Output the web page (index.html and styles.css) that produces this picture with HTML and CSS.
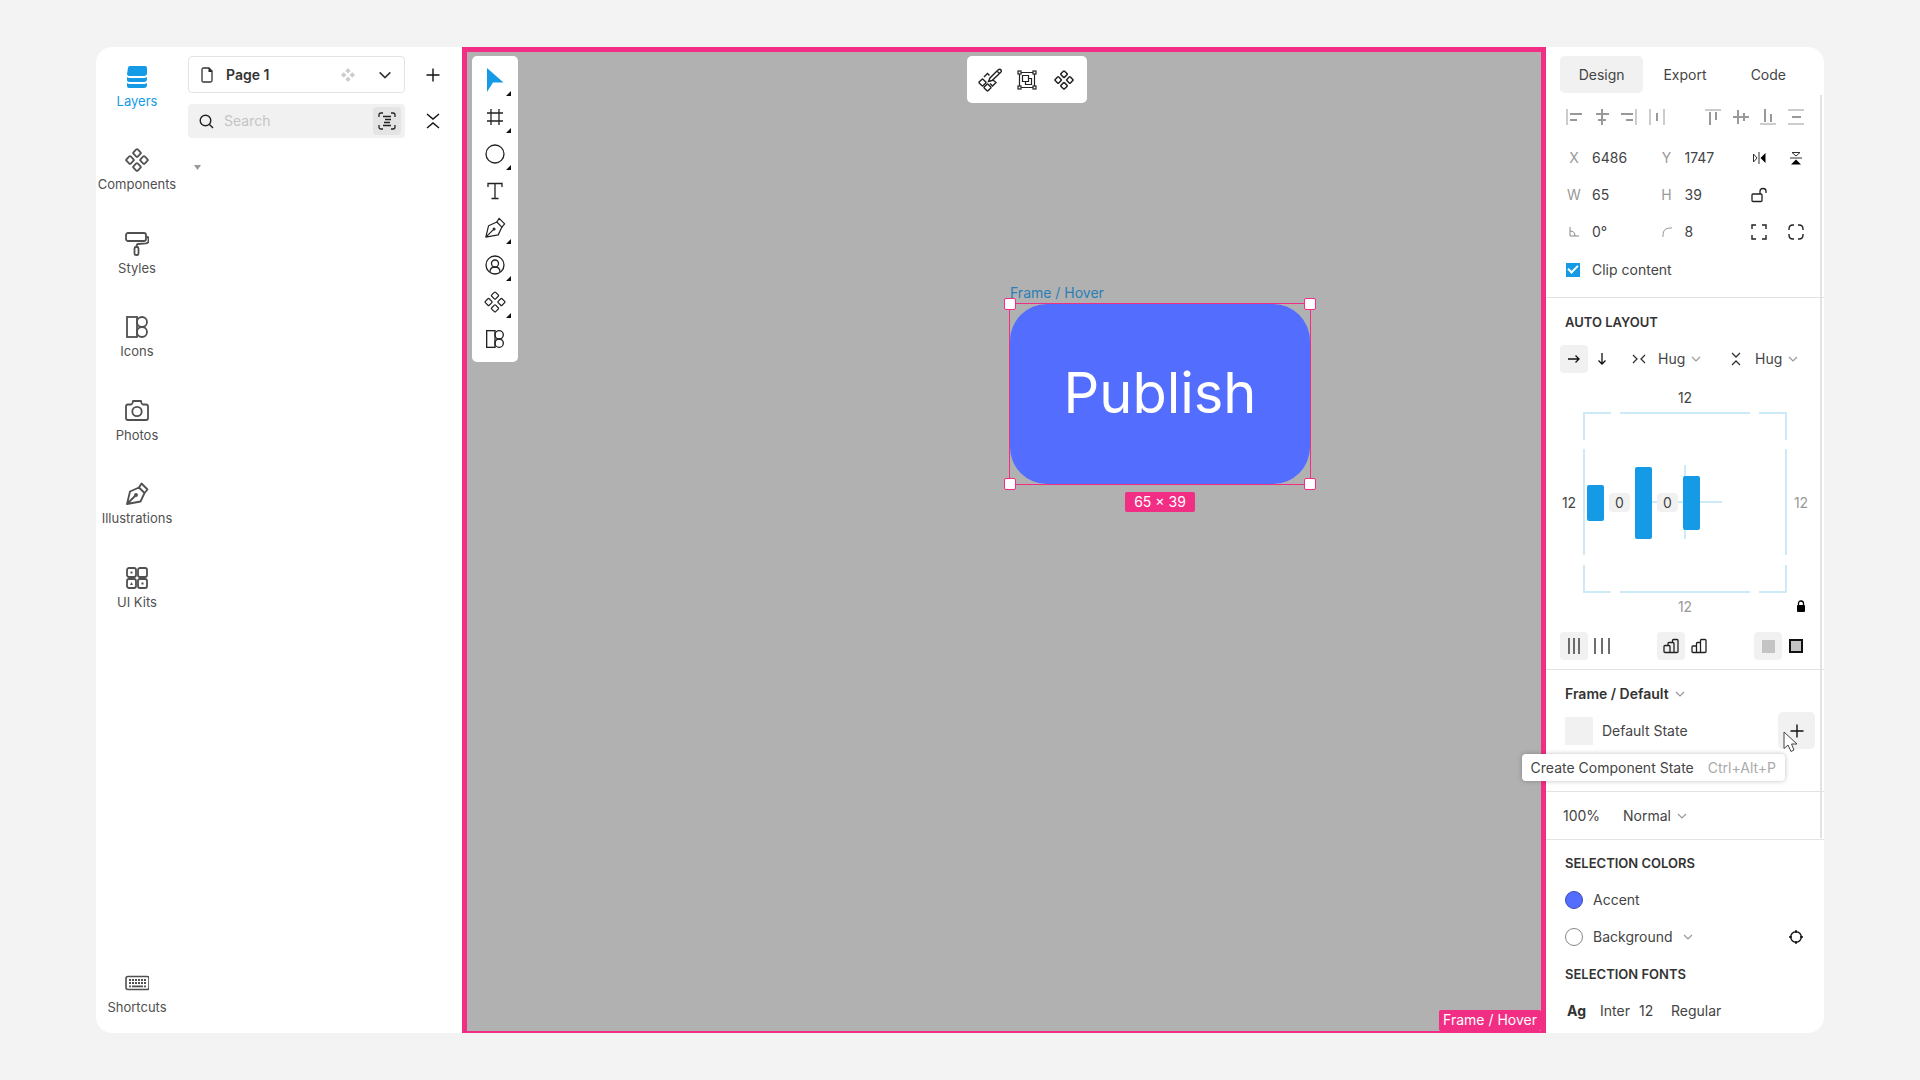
FILE: index.html
```html
<!DOCTYPE html>
<html lang="en">
<head>
<meta charset="utf-8">
<meta name="viewport" content="width=device-width, initial-scale=1">
<title>Design editor</title>
<link rel="stylesheet" href="styles.css">
</head>
<body>
<svg class="sprite" aria-hidden="true">
  <symbol id="components" viewBox="0 0 24 24"><g fill="none" stroke="currentColor" stroke-linejoin="round"><rect x="-3" y="-3" width="6" height="6" rx="1" transform="translate(12 5) rotate(45)"/><rect x="-3" y="-3" width="6" height="6" rx="1" transform="translate(5 12) rotate(45)"/><rect x="-3" y="-3" width="6" height="6" rx="1" transform="translate(19 12) rotate(45)"/><rect x="-3" y="-3" width="6" height="6" rx="1" transform="translate(12 19) rotate(45)"/></g></symbol>
  <symbol id="pen" viewBox="0 0 24 24"><g fill="none" stroke="currentColor" stroke-linejoin="round" stroke-linecap="round"><path d="M2 22 5 9.500 14 5.500 19.500 11 15.500 19.500ZM2 22 10 14"/><circle cx="11" cy="13" r="1"/><path d="M14 5.500 16.500 1.500 22.500 7.500 19.500 11"/></g></symbol>
  <symbol id="icons" viewBox="0 0 24 24"><g fill="none" stroke="currentColor"><rect x="2" y="2" width="10" height="20"/><circle cx="17" cy="7" r="5"/><circle cx="17" cy="17" r="5"/></g></symbol>
  <symbol id="chevron" viewBox="0 0 12 12"><path d="M2 4 6 8 10 4" fill="none" stroke="currentColor"/></symbol>
  <symbol id="plus" viewBox="0 0 14 14"><path d="M7 .5V13.500M.5 7H13.500" fill="none" stroke="currentColor"/></symbol>
  <symbol id="collapse" viewBox="0 0 14 18"><path d="M1 2 7 7 13 2M1 16 7 11 13 16" fill="none" stroke="currentColor"/></symbol>
</svg>

<main class="app">
  <nav class="rail" aria-label="Libraries">
    <ul class="rail-list">
      <li><a class="rail-item active" href="#layers">
        <svg class="i24" viewBox="0 0 24 24"><path fill="currentColor" d="M5 1H20Q22 1 22 3V8Q22 11 19 11H4Q2 11 2 9L3 3Q3 1 5 1ZM2 12Q3 13 5 13H20L22 12V14Q22 17 19 17H4Q2 17 2 15ZM2 18Q3 19 5 19H20L22 18V20Q22 23 19 23H4Q2 23 2 21Z"/></svg>Layers</a></li>
      <li><a class="rail-item" href="#components"><svg class="i24 bold"><use href="#components"/></svg>Components</a></li>
      <li><a class="rail-item" href="#styles">
        <svg class="i24 bold" viewBox="0 0 24 24"><g fill="none" stroke="currentColor"><rect x="1" y="1" width="20" height="8" rx="2"/><path d="M21 5H22Q23.500 5 23.500 7V9Q23.500 11 21 11.300L13 12Q11.500 12.200 11.500 15"/><rect x="9.500" y="15" width="4" height="8" rx="1.500"/></g></svg>Styles</a></li>
      <li><a class="rail-item" href="#icons"><svg class="i24 bold"><use href="#icons"/></svg>Icons</a></li>
      <li><a class="rail-item" href="#photos">
        <svg class="i24 bold" viewBox="0 0 24 24"><g fill="none" stroke="currentColor" stroke-linejoin="round"><path d="M3 5.500H6Q7 5.500 7.500 4L8 2H16L16.500 4Q17 5.500 18 5.500H21Q23 5.500 23 7.500V19Q23 21 21 21H3Q1 21 1 19V7.500Q1 5.500 3 5.500Z"/><circle cx="12" cy="12.500" r="4.700"/></g></svg>Photos</a></li>
      <li><a class="rail-item" href="#illustrations"><svg class="i24 bold"><use href="#pen"/></svg>Illustrations</a></li>
      <li><a class="rail-item" href="#kits">
        <svg class="i24 bold" viewBox="0 0 24 24"><g fill="none" stroke="currentColor"><rect x="2" y="2" width="9" height="9" rx="2"/><rect x="13" y="2" width="9" height="9" rx="2"/><rect x="2" y="13" width="9" height="9" rx="2"/><rect x="13" y="13" width="9" height="9" rx="2"/></g><path fill="currentColor" d="M5.500 5.500h2v2h-2zM6.500 16l1.500 3h-3zM16.500 16.500h2v2h-2z"/></svg>UI Kits</a></li>
    </ul>
    <a class="rail-item" href="#shortcuts">
      <svg class="i24" viewBox="0 0 24 24"><rect x="1" y="5.500" width="23" height="13" rx="2" fill="none" stroke="currentColor" stroke-width="1.600"/><path d="M4 9H21.500M4 12H21.500" stroke="currentColor" stroke-width="1.800" stroke-dasharray="2 1"/><path d="M4 15.300H6M7 15.300H18M19 15.300H21" stroke="currentColor" stroke-width="1.800"/></svg>Shortcuts</a>
  </nav>

  <aside class="pages">
    <div class="pages-row">
      <button class="page-picker" type="button">
        <svg width="12" height="16" viewBox="0 0 12 16"><path d="M2.500 1H8L11 4V13.500Q11 15 9.500 15H2.500Q1 15 1 13.500V2.500Q1 1 2.500 1Z" fill="none" stroke="#333" stroke-width="1.300"/><path d="M7.500 1 11.500 5H7.500Z" fill="#222"/></svg>
        <span class="page-name">Page 1</span>
        <svg class="page-comp" width="14" height="14" viewBox="0 0 14 14"><path fill="#ccc" d="M7 0 9.700 2.700 7 5.400 4.300 2.700ZM7 8.600 9.700 11.300 7 14 4.300 11.300ZM2.700 4.300 5.400 7 2.700 9.700 0 7ZM11.300 4.300 14 7 11.300 9.700 8.600 7Z"/></svg>
        <svg class="page-chev" width="16" height="16"><use href="#chevron"/></svg>
      </button>
      <button class="side-btn" type="button" aria-label="Add page"><svg width="14" height="14"><use href="#plus"/></svg></button>
    </div>
    <div class="pages-row">
      <div class="search">
        <svg width="15" height="15" viewBox="0 0 15 15" fill="none" stroke="#222" stroke-width="1.400"><circle cx="6.500" cy="6.500" r="5.300"/><path d="M10.500 10.500 14 14"/></svg>
        <input type="search" placeholder="Search" aria-label="Search layers">
        <button class="scan" type="button" aria-label="Select matches"><svg width="18" height="18" viewBox="0 0 18 18" fill="none" stroke="#222" stroke-width="1.300"><path d="M1 5V3Q1 1 3 1H5M13 1H15Q17 1 17 3V5M17 13V15Q17 17 15 17H13M5 17H3Q1 17 1 15V13M5 4.500H13M7 7.500H13M6 10.500H12M5 13.500H13"/></svg></button>
      </div>
      <button class="side-btn" type="button" aria-label="Collapse all"><svg width="14" height="18"><use href="#collapse"/></svg></button>
    </div>
    <svg class="twisty" width="7" height="5" viewBox="0 0 7 5"><path d="M0 0H7L3.500 5Z" fill="#999"/></svg>
  </aside>

  <section class="canvas" aria-label="Canvas">
    <div class="tools" role="toolbar" aria-label="Tools">
      <button class="tool more" type="button" aria-label="Select"><svg width="18" height="24" viewBox="0 0 18 24"><path d="M1 0 17.500 14.500H7L1 24Z" fill="#159be5"/></svg></button>
      <button class="tool more" type="button" aria-label="Frame"><svg width="18" height="18" viewBox="0 0 18 18"><path d="M5 1V17M13 1V17M1 5H17M1 13H17" fill="none" stroke="#222" stroke-width="1.300"/></svg></button>
      <button class="tool more" type="button" aria-label="Shape"><svg width="20" height="20" viewBox="0 0 20 20"><circle cx="10" cy="10" r="9" fill="none" stroke="#222" stroke-width="1.300"/></svg></button>
      <button class="tool" type="button" aria-label="Text"><svg width="18" height="18" viewBox="0 0 18 18"><path d="M2 5V1.500H16V5M9 1.500V16.500M5.500 16.500H12.500" fill="none" stroke="#222" stroke-width="1.300"/></svg></button>
      <button class="tool more" type="button" aria-label="Pen"><svg class="i22"><use href="#pen"/></svg></button>
      <button class="tool more" type="button" aria-label="Avatar"><svg width="20" height="20" viewBox="0 0 20 20" fill="none" stroke="#222" stroke-width="1.300"><circle cx="10" cy="10" r="9"/><circle cx="10" cy="8.500" r="3.500"/><path d="M5 17Q5 12 10 12T15 17"/></svg></button>
      <button class="tool more" type="button" aria-label="Component"><svg class="i22"><use href="#components"/></svg></button>
      <button class="tool" type="button" aria-label="Icon set"><svg class="i20"><use href="#icons"/></svg></button>
    </div>

    <div class="actions" role="toolbar" aria-label="Selection actions">
      <button class="tool" type="button" aria-label="Edit component"><svg width="24" height="24" viewBox="0 0 24 24" fill="none" stroke="#222" stroke-width="1.400"><rect x="-2.700" y="-2.700" width="5.400" height="5.400" rx="1" transform="translate(4.500 14.500) rotate(45)"/><rect x="-2.700" y="-2.700" width="5.400" height="5.400" rx="1" transform="translate(9.500 19.500) rotate(45)"/><path d="M6 9 9.500 5.500 11.500 7.500M15 12 18 14.500 14.500 18 12 15.500M10.500 13.500 12 10 20 2Q22 .5 23 2T22 5L14 12.500 10.500 13.500ZM19 3 21.500 5.500"/></svg></button>
      <button class="tool" type="button" aria-label="Group"><svg width="20" height="20" viewBox="0 0 20 20" fill="none" stroke="#222" stroke-width="1.200"><path d="M2.500 2.500H17.500V17.500H2.500ZM5.500 5.500H11.500V11.500H5.500ZM11.500 8.500H14.500V14.500H8.500V11.500"/><g fill="#fff"><rect x="1" y="1" width="3" height="3"/><rect x="16" y="1" width="3" height="3"/><rect x="1" y="16" width="3" height="3"/><rect x="16" y="16" width="3" height="3"/></g></svg></button>
      <button class="tool" type="button" aria-label="Create component"><svg class="i20 bold"><use href="#components"/></svg></button>
    </div>

    <div class="selection">
      <span class="frame-name">Frame / Hover</span>
      <div class="frame">Publish</div>
      <i class="handle tl"></i><i class="handle tr"></i><i class="handle bl"></i><i class="handle br"></i>
      <span class="size">65 × 39</span>
    </div>
    <span class="canvas-tag">Frame / Hover</span>
  </section>

  <aside class="inspector">
    <div class="tabs" role="tablist">
      <button class="tab active" type="button" role="tab" aria-selected="true">Design</button>
      <button class="tab" type="button" role="tab">Export</button>
      <button class="tab" type="button" role="tab">Code</button>
    </div>
    <div class="scrollbar"></div>

    <section class="group">
      <div class="align">
        <button type="button" aria-label="Align left"><svg class="al" viewBox="0 0 16 16"><path d="M1 0V16"/><path class="thick" d="M4 5H16M4 11H11"/></svg></button>
        <button type="button" aria-label="Align center"><svg class="al" viewBox="0 0 16 16"><path class="thick" d="M8 0V16M2 5H15M4 11H12"/></svg></button>
        <button type="button" aria-label="Align right"><svg class="al" viewBox="0 0 16 16"><path d="M15 0V16"/><path class="thick" d="M0 5H12M5 11H12"/></svg></button>
        <button type="button" aria-label="Distribute horizontally"><svg class="al" viewBox="0 0 16 16"><path d="M1 0V16M15 0V16"/><path class="thick" d="M8 4V12"/></svg></button>
        <span></span>
        <button type="button" aria-label="Align top"><svg class="al" viewBox="0 0 16 16"><path d="M0 1H16"/><path class="thick" d="M5 3V16M11 3V11"/></svg></button>
        <button type="button" aria-label="Align middle"><svg class="al" viewBox="0 0 16 16"><path class="thick" d="M0 8H16M5 1V15M11 4V12"/></svg></button>
        <button type="button" aria-label="Align bottom"><svg class="al" viewBox="0 0 16 16"><path d="M0 15H16"/><path class="thick" d="M5 0V13M11 5V13"/></svg></button>
        <button type="button" aria-label="Distribute vertically"><svg class="al" viewBox="0 0 16 16"><path d="M0 1H16M0 15H16"/><path class="thick" d="M4 8H13"/></svg></button>
      </div>
      <div class="fields">
        <label for="fx">X</label><input id="fx" value="6486"><label for="fy">Y</label><input id="fy" value="1747">
        <div class="pair">
          <button type="button" aria-label="Flip horizontal"><svg width="14" height="12" viewBox="0 0 14 12"><path d="M1.500 2 5 6 1.500 10ZM7 0V12" fill="none" stroke="#333"/><path d="M13.500 1V11L8.500 6Z"/></svg></button>
          <button type="button" aria-label="Flip vertical"><svg width="12" height="14" viewBox="0 0 12 14"><path d="M2 1.500 6 5 10 1.500ZM0 7H12" fill="none" stroke="#333"/><path d="M1 13.500H11L6 8.500Z"/></svg></button>
        </div>
        <label for="fw">W</label><input id="fw" value="65"><label for="fh">H</label><input id="fh" value="39">
        <div class="pair"><button type="button" aria-label="Lock ratio"><svg width="16" height="16" viewBox="0 0 16 16" fill="none" stroke="#222" stroke-width="1.300"><rect x="1" y="7" width="10" height="7.500" rx="1"/><path d="M9 7V4Q9 1.500 12 1.500T15 4V6"/></svg></button></div>
        <label for="fr" aria-label="Rotation"><svg width="10" height="10" viewBox="0 0 10 10" fill="none" stroke="#888"><path d="M1 0V9H10M1 4Q6 4 6 9"/></svg></label><input id="fr" value="0°"><label for="fc" aria-label="Corner radius"><svg width="10" height="10" viewBox="0 0 10 10" fill="none" stroke="#999"><path d="M1 10V8Q1 1 8 1H10"/></svg></label><input id="fc" value="8">
        <div class="pair">
          <button type="button" aria-label="Square corners"><svg width="16" height="16" viewBox="0 0 16 16" fill="none" stroke="#222" stroke-width="1.400"><path d="M1 5V1H5M11 1H15V5M15 11V15H11M5 15H1V11"/></svg></button>
          <button type="button" aria-label="Round corners"><svg width="16" height="16" viewBox="0 0 16 16" fill="none" stroke="#222" stroke-width="1.400"><path d="M1 6V5Q1 1 5 1H6M10 1H11Q15 1 15 5V6M15 10V11Q15 15 11 15H10M6 15H5Q1 15 1 11V10"/></svg></button>
        </div>
      </div>
      <label class="check"><input type="checkbox" checked>Clip content</label>
    </section>

    <section class="group">
      <h2>AUTO LAYOUT</h2>
      <div class="direction">
        <div class="duo">
          <button class="on" type="button" aria-label="Horizontal"><svg width="12" height="12" viewBox="0 0 12 12" fill="none" stroke="#111" stroke-width="1.300"><path d="M0 6H11M7.500 2.500 11 6 7.500 9.500"/></svg></button>
          <button type="button" aria-label="Vertical"><svg width="12" height="12" viewBox="0 0 12 12" fill="none" stroke="#111" stroke-width="1.300"><path d="M6 0V11M2.500 7.500 6 11 9.500 7.500"/></svg></button>
        </div>
        <label class="picker"><span class="pic"><svg width="14" height="10" viewBox="0 0 14 10" fill="none" stroke="#333" stroke-width="1.300"><path d="M1 1 5 5 1 9M13 1 9 5 13 9"/></svg></span><select aria-label="Width sizing"><option>Hug</option></select><svg class="chev"><use href="#chevron"/></svg></label>
        <label class="picker"><span class="pic"><svg width="10" height="14" viewBox="0 0 10 14" fill="none" stroke="#333" stroke-width="1.300"><path d="M1 1 5 5 9 1M1 13 5 9 9 13"/></svg></span><select aria-label="Height sizing"><option>Hug</option></select><svg class="chev"><use href="#chevron"/></svg></label>
      </div>
      <div class="padding">
        <input class="pad-top" value="12" aria-label="Top padding">
        <input class="pad-left" value="12" aria-label="Left padding">
        <div class="pad-box">
          <svg class="pad-lines" width="204" height="181" viewBox="0 0 204 181" fill="none" stroke="#cdeaf8" stroke-width="2"><path d="M28 1H1V28M37 1H167M176 1H203V28M1 37V143M203 37V143M1 153V180H28M37 180H167M176 180H203V153M65 90H139M102 53V127"/></svg>
          <span class="bar short"></span><input class="gap-val" value="0" aria-label="First gap"><span class="bar tall"></span><input class="gap-val" value="0" aria-label="Second gap"><span class="bar mid"></span>
        </div>
        <input class="pad-right dim" value="12" aria-label="Right padding">
        <input class="pad-bottom dim" value="12" aria-label="Bottom padding">
        <button class="lock" type="button" aria-label="Lock padding"><svg width="10" height="13" viewBox="0 0 10 13"><path d="M2.500 6V3.500Q2.500 1 5 1T7.500 3.500V6" fill="none" stroke="#000" stroke-width="1.300"/><rect x="1" y="5" width="8" height="7" rx="1"/></svg></button>
      </div>
      <div class="options">
        <div class="duo">
          <button class="on" type="button" aria-label="Packed"><svg width="16" height="16" viewBox="0 0 16 16" stroke="#333" stroke-width="1.400"><path d="M3 0V16M8 0V16M13 0V16"/></svg></button>
          <button type="button" aria-label="Spaced"><svg width="16" height="16" viewBox="0 0 16 16" stroke="#333" stroke-width="1.400"><path d="M1 0V16M8 0V16M15 0V16"/></svg></button>
        </div>
        <div class="duo">
          <button class="on" type="button" aria-label="Last on top"><svg width="16" height="16" viewBox="0 0 16 16" fill="none" stroke="#222" stroke-width="1.300"><path d="M1 8.500Q1 7.500 2 7.500H6Q7 7.500 7 8.500V14.500H2Q1 14.500 1 13.500ZM5 7.500V5.500Q5 4.500 6 4.500H10Q11 4.500 11 5.500V14.500H7M9.500 4.500V2.500Q9.500 1.500 10.500 1.500H14Q15 1.500 15 2.500V13.500Q15 14.500 14 14.500H11"/></svg></button>
          <button type="button" aria-label="First on top"><svg width="16" height="16" viewBox="0 0 16 16" fill="none" stroke="#222" stroke-width="1.300"><path d="M9.500 14.500V2.500Q9.500 1.500 10.500 1.500H14Q15 1.500 15 2.500V13.500Q15 14.500 14 14.500ZM9.500 4.500H6.500Q5.500 4.500 5.500 5.500V14.500H9.500M5.500 8H2Q1 8 1 9V13.500Q1 14.500 2 14.500H5.500"/></svg></button>
        </div>
        <div class="duo">
          <button class="on" type="button" aria-label="Exclude strokes"><i class="square"></i></button>
          <button type="button" aria-label="Include strokes"><i class="square outlined"></i></button>
        </div>
      </div>
    </section>

    <section class="group states">
      <h2 class="strong">Frame / Default <svg class="chev"><use href="#chevron"/></svg></h2>
      <div class="state">
        <span class="thumb"></span>Default State
        <button class="add" type="button" aria-describedby="tip" aria-label="Create Component State"><svg width="14" height="14"><use href="#plus"/></svg></button>
        <div class="tooltip" id="tip" role="tooltip">Create Component State<kbd>Ctrl+Alt+P</kbd></div>
        <svg class="pointer" width="16" height="22" viewBox="0 0 16 22"><path d="M1 1V17.500L5 14 8 20.500 11 19 8.500 13H14Z" fill="#fff" stroke="#444"/></svg>
      </div>
    </section>

    <section class="group">
      <div class="blend"><input value="100%" aria-label="Opacity"><select aria-label="Blend mode"><option>Normal</option></select><svg class="chev"><use href="#chevron"/></svg></div>
    </section>

    <section class="group">
      <h2>SELECTION COLORS</h2>
      <div class="color"><i class="dot accent"></i>Accent</div>
      <div class="color"><i class="dot"></i>Background<svg class="chev"><use href="#chevron"/></svg>
        <button class="target" type="button" aria-label="Find usages"><svg width="14" height="14" viewBox="0 0 14 14" fill="none" stroke="#111" stroke-width="1.400"><circle cx="7" cy="7" r="5.300"/><path d="M7 0V3M7 11V14M0 7H3M11 7H14"/></svg></button></div>
      <h2>SELECTION FONTS</h2>
      <div class="font"><b>Ag</b><span class="family">Inter</span><span class="pt">12</span><span>Regular</span></div>
    </section>
  </aside>
</main>
</body>
</html>
```
FILE: styles.css
```css
* { box-sizing: border-box; }
body {
  margin: 0;
  min-height: 100vh;
  padding: 47px 5%;
  display: flex;
  background: #f3f3f3;
  color: #444;
  font: 14px/20px Inter, "Liberation Sans", sans-serif;
}
button, input, select {
  font: inherit;
  color: inherit;
  margin: 0;
  padding: 0;
  border: 0;
  background: none;
  border-radius: 0;
  outline: 0;
}
button { display: flex; align-items: center; justify-content: center; }
input { width: 100%; min-width: 0; }
select { appearance: none; }
svg { display: block; flex: none; }
.sprite { position: absolute; width: 0; height: 0; }
.i20 { width: 20px; height: 20px; stroke-width: 1.6; }
.i22 { width: 22px; height: 22px; stroke-width: 1.3; }
.i24 { width: 24px; height: 24px; }
.bold { stroke-width: 1.8; }
.chev { width: 12px; height: 12px; color: #999; stroke-width: 1.2; }

.app {
  flex: 1;
  display: grid;
  grid-template-columns: 82px 284px minmax(0, 1fr) 278px;
  background: #fff;
  border-radius: 16px;
}

/* Library rail */
.rail { display: flex; flex-direction: column; justify-content: space-between; padding: 18px 0 17px; }
.rail-list { margin: 0; padding: 0; list-style: none; display: flex; flex-direction: column; height: 584px; }
.rail-list li { flex: 1; }
.rail-item {
  display: flex;
  flex-direction: column;
  align-items: center;
  gap: 3px;
  color: #505050;
  font-size: 13px;
  line-height: 18px;
  text-decoration: none;
}
.rail-item.active { color: #159be5; }

/* Pages and layers */
.pages { padding: 9px 0 0 10px; display: flex; flex-direction: column; gap: 11px; }
.pages-row { display: flex; align-items: center; padding-right: 2px; }
.page-picker, .search { flex: 1; display: flex; align-items: center; border-radius: 4px; }
.page-picker { height: 37px; padding: 0 11px 0 12px; border: 1px solid #e3e3e3; color: #333; justify-content: flex-start; }
.page-name { margin-left: 13px; font-weight: 600; }
.page-comp { margin-left: auto; }
.page-chev { margin-left: 22px; stroke-width: 1.2; }
.side-btn { width: 55px; height: 34px; color: #111; stroke-width: 1.4; }
.search { height: 34px; padding: 0 4px 0 11px; background: #f1f1f1; gap: 10px; }
.search input { flex: 1; appearance: none; }
.search input::placeholder { color: #c4c4c4; }
.scan { flex: none; width: 28px; height: 28px; border-radius: 4px; background: #e4e4e4; }
.twisty { margin: 16px 0 0 6px; }

/* Canvas */
.canvas { position: relative; border: 5px solid #f22e84; border-bottom-width: 2px; background: #b1b1b1; }
.tools, .actions { position: absolute; top: 4px; display: flex; background: #fff; border-radius: 5px; padding: 5px 4px; }
.tools { left: 5px; flex-direction: column; width: 46px; }
.actions { left: 500px; width: 120px; height: 47px; }
.tool { position: relative; flex: none; width: 37px; height: 37px; color: #222; }
.more::after {
  content: "";
  position: absolute;
  right: 2px;
  bottom: 2px;
  width: 5px;
  height: 5px;
  background: #111;
  clip-path: polygon(100% 0, 100% 100%, 0 100%);
}
.selection { position: absolute; left: 542px; top: 251px; width: 302px; height: 182px; border: 1px solid #f22e84; }
.frame {
  height: 100%;
  display: flex;
  align-items: center;
  justify-content: center;
  padding-bottom: 2px;
  border-radius: 37px;
  background: #536eff;
  color: #fff;
  font-size: 56px;
  line-height: 68px;
}
.frame-name { position: absolute; left: 0; bottom: calc(100% + 1px); color: #2a7fb8; }
.handle { position: absolute; width: 12px; height: 12px; border: 1px solid #f22e84; border-radius: 2px; background: #fff; }
.tl, .tr { top: -6px; }
.bl, .br { bottom: -6px; }
.tl, .bl { left: -6px; }
.tr, .br { right: -6px; }
.size, .canvas-tag { position: absolute; background: #f22e84; color: #fff; border-radius: 2px; }
.size { top: calc(100% + 8px); left: 115px; width: 70px; text-align: center; }
.canvas-tag { right: 0; bottom: 0; padding: 0 4px 1px; }

/* Inspector */
.inspector { position: relative; padding-top: 9px; }
.tabs { display: grid; grid-template-columns: repeat(3, 1fr); padding: 0 14px; }
.tab { height: 37px; border-radius: 5px; }
.tab.active { background: #f1f1f1; }
.scrollbar { position: absolute; right: 2px; top: 48px; width: 2px; height: 743px; background: #e3e3e3; }
.group { padding: 5px 14px; border-bottom: 1px solid #e3e3e3; }
.group:last-child { border: 0; padding: 4px 14px; }
.group h2 { margin: 0; padding: 0 5px; height: 37px; display: flex; align-items: center; gap: 5px; font-size: 13px; font-weight: 600; color: #333; }
.group h2.strong { font-size: 14px; }
.align { display: grid; grid-template-columns: repeat(9, 1fr); height: 37px; margin-bottom: 4px; }
.al { width: 16px; height: 16px; fill: none; stroke: #999; }
.al .thick { stroke-width: 2; }
.fields { display: grid; grid-template-columns: 28px 1fr 28px 1fr 65px; grid-auto-rows: 37px; align-items: center; margin-bottom: 1px; }
.fields label { display: flex; justify-content: center; color: #999; }
.fields input { padding-left: 4px; }
.pair { display: flex; justify-content: space-between; }
.pair button { width: 28px; height: 28px; }
.check { display: flex; align-items: center; gap: 12px; height: 37px; padding-left: 6px; margin-bottom: 4px; }
.check input {
  appearance: none;
  width: 14px;
  height: 14px;
  background: #159be5;
  display: grid;
  place-items: center;
}
.check input:checked::after { content: ""; width: 8px; height: 4px; margin-bottom: 3px; border: solid #fff; border-width: 0 0 2px 2px; transform: rotate(-45deg); }
.direction { display: flex; justify-content: space-between; align-items: center; height: 37px; }
.duo { display: flex; }
.duo button { width: 28px; height: 28px; border-radius: 4px; }
.duo .on { background: #f1f1f1; }
.picker { display: flex; align-items: center; width: 88px; }
.pic { width: 28px; margin-right: 5px; display: flex; justify-content: center; }
.picker select { width: 32px; }
.padding {
  margin: 7px 0 12px;
  display: grid;
  grid-template:
    ". top ." 28px
    "left box right" 181px
    ". bottom lock" 27px / 18px 204px 18px;
  justify-content: space-between;
  align-items: center;
}
.padding input { text-align: center; }
.padding .dim { color: #999; }
.pad-top { grid-area: top; }
.pad-left { grid-area: left; }
.pad-right { grid-area: right; }
.pad-bottom { grid-area: bottom; }
.pad-box { grid-area: box; position: relative; display: flex; align-items: center; gap: 5px; height: 181px; padding-left: 4px; }
.pad-lines { position: absolute; inset: 0; }
.bar { position: relative; width: 17px; border-radius: 2px; background: #159be5; }
.short { height: 36px; }
.mid { height: 54px; }
.tall { height: 72px; }
.padding .gap-val { position: relative; width: 21px; height: 19px; border-radius: 4px; background: #f1f1f1; }
.lock { grid-area: lock; justify-self: center; }
.options { display: flex; justify-content: space-between; margin-bottom: 4px; }
.square { width: 13px; height: 13px; background: #c4c4c4; }
.outlined { width: 14px; height: 14px; border: 2px solid #111; }
.states { padding-bottom: 42px; }
.state { position: relative; display: flex; align-items: center; height: 37px; padding-left: 5px; }
.thumb { width: 28px; height: 28px; margin-right: 9px; background: #f1f1f1; }
.add { width: 37px; height: 37px; margin: 0 -5px 0 auto; border-radius: 5px; background: #f1f1f1; color: #111; stroke-width: 1.4; }
.tooltip {
  position: absolute;
  z-index: 2;
  right: 25px;
  top: 42px;
  padding: 4px 9px 3px;
  display: flex;
  gap: 14px;
  border-radius: 4px;
  background: #fff;
  box-shadow: 0 0 5px rgba(0, 0, 0, .25);
  white-space: nowrap;
}
.tooltip kbd { font: inherit; color: #aaa; }
.pointer { position: absolute; right: 11px; top: 19px; z-index: 3; }
.blend { display: flex; align-items: center; height: 37px; padding-left: 3px; }
.blend input { width: 60px; }
.blend select { width: 53px; }
.color { display: flex; align-items: center; height: 37px; padding-left: 5px; }
.dot { width: 18px; height: 18px; margin-right: 10px; border: 1px solid #888; border-radius: 50%; }
.dot.accent { background: #536eff; border-color: #3a4db3; }
.color .chev { margin-left: 9px; }
.target { width: 28px; height: 28px; margin-left: auto; }
.font { display: flex; align-items: center; height: 37px; padding-left: 7px; }
.font b { color: #333; width: 33px; }
.family { width: 39px; }
.pt { width: 32px; }
```
